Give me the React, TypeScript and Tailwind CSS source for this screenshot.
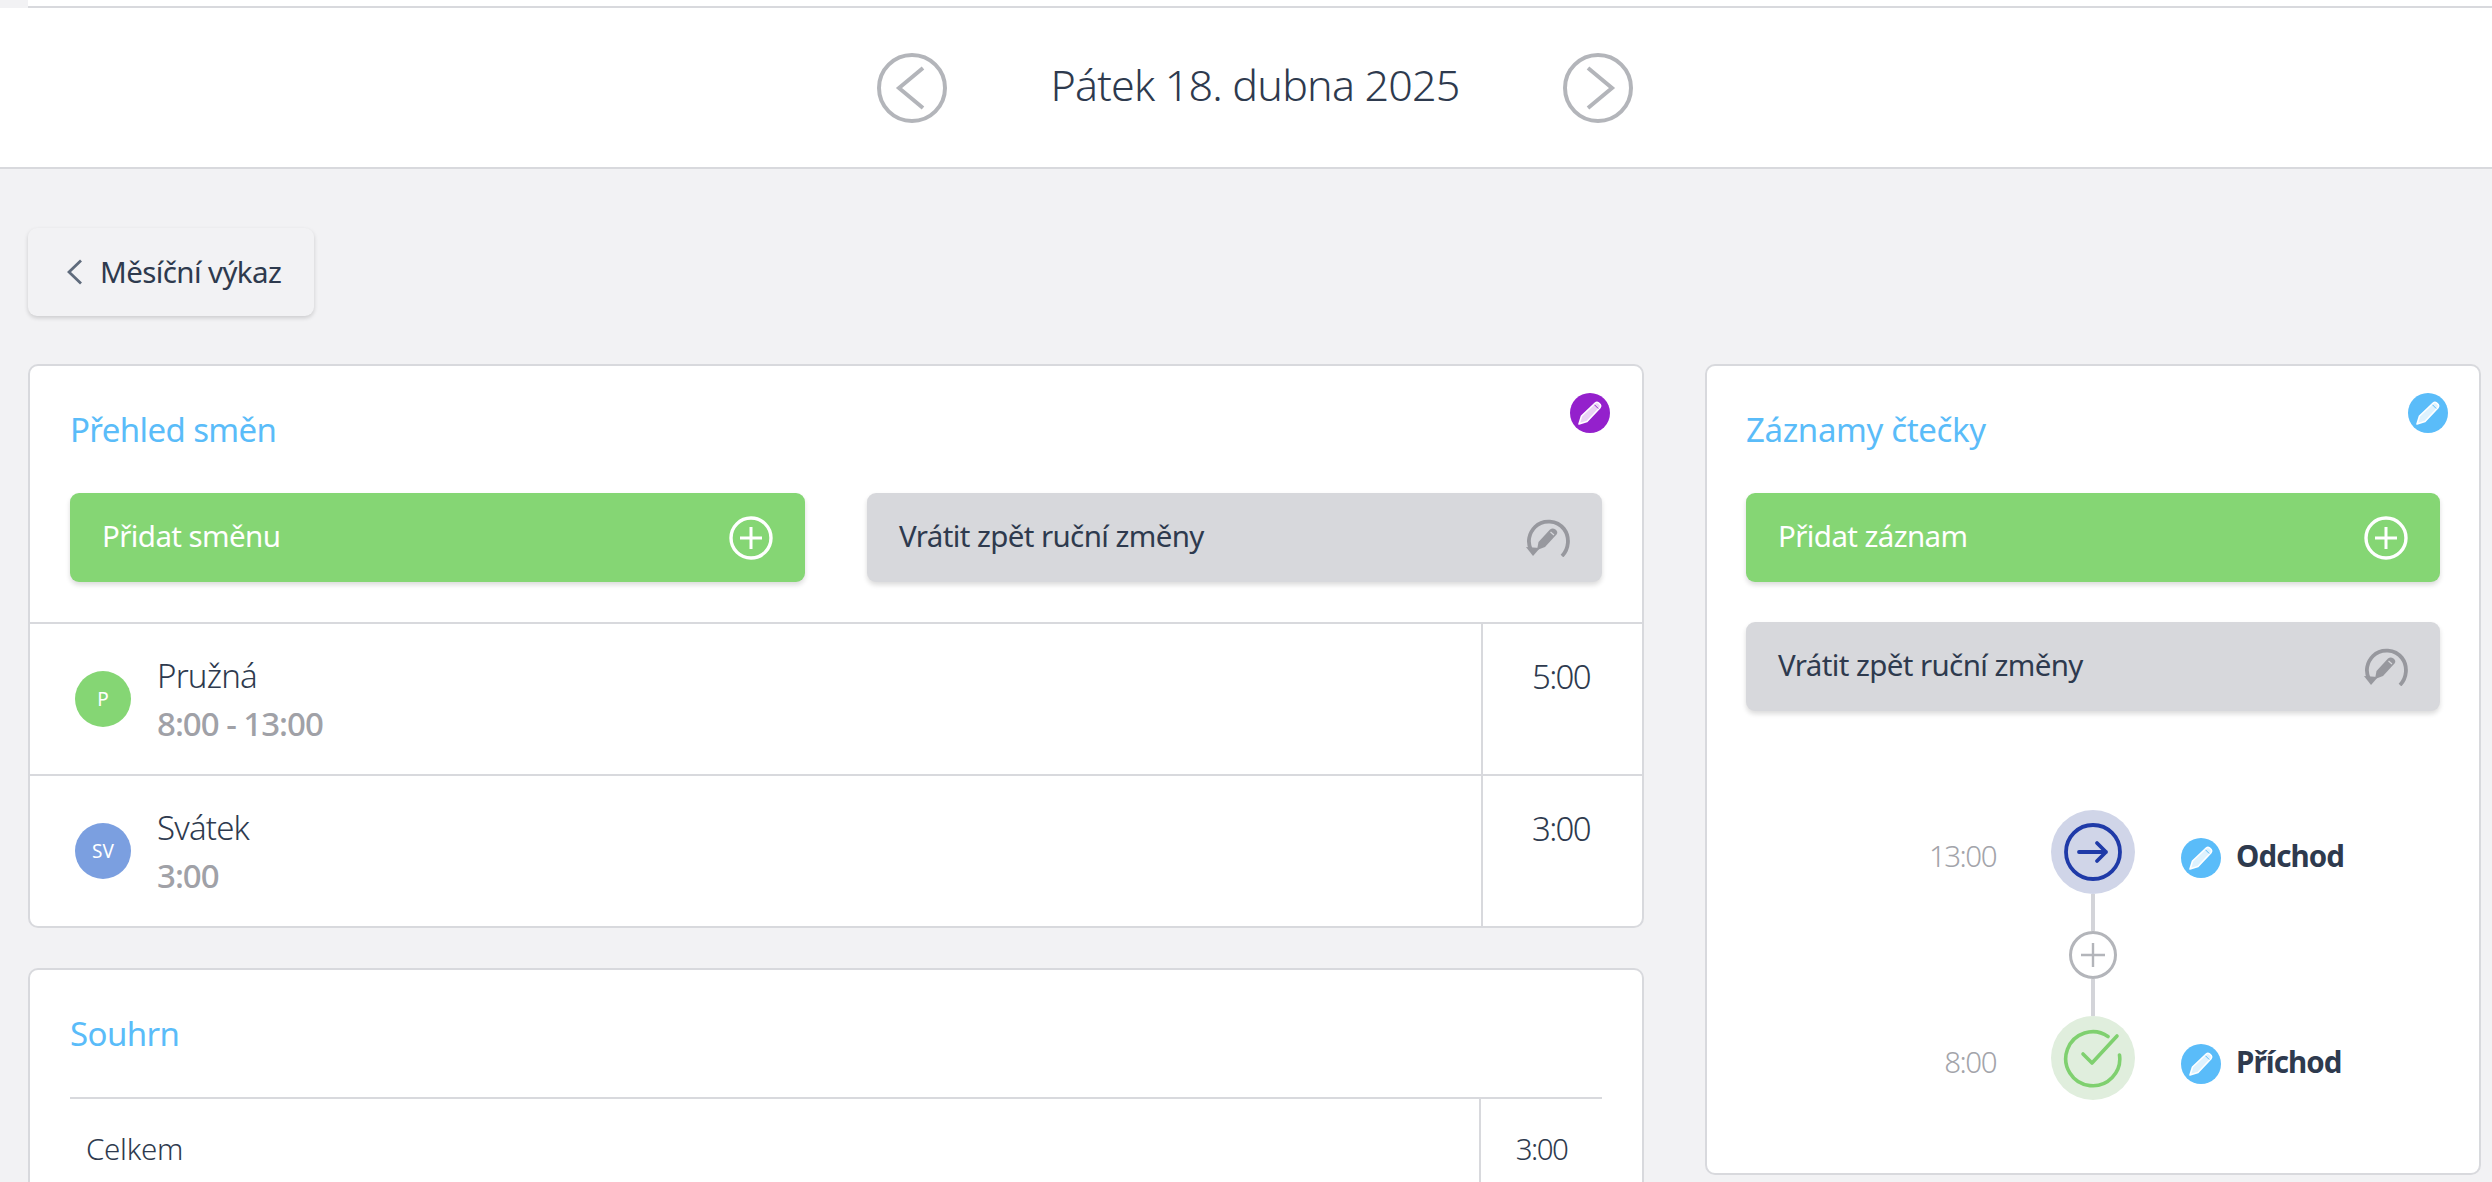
import React from "react";

function Pencil({ bg, className }: { bg: string; className?: string }) {
  return (
    <svg viewBox="0 0 40 40" className={className} width="40" height="40">
      <circle cx="20" cy="20" r="20" fill={bg} />
      <path d="M9 31 L11.5 23 L25.2 10 Q26.8 8.6 28.4 9.8 L30.2 11.6 Q31.4 13.2 30 14.8 L17 28.5 Z" fill="#fff" fillOpacity="0.8" stroke="#fff" strokeWidth="1.6" strokeLinejoin="round" />
      <path d="M24.5 11.8 L28.2 15.5" stroke={bg} strokeWidth="1" />
    </svg>
  );
}

function PlusCircle() {
  return (
    <svg viewBox="0 0 44 44" width="44" height="44" fill="none" stroke="#fff" strokeWidth="3.4">
      <circle cx="22" cy="22" r="20" />
      <path d="M22 11V33M11 22H33" strokeWidth="3" />
    </svg>
  );
}

function UndoPencil() {
  return (
    <svg viewBox="0 0 44 38" width="44" height="38" fill="none">
      <path d="M36 37 C43 30 44 18 38 10 C31 1 17 0 9 8 C3 14 1 23 5 31" stroke="#97989e" strokeWidth="3.8" />
      <path d="M0 28 L7 37 L14 29 Z" fill="#97989e" />
      <path d="M11 31 L12.5 23 L24 10.5 Q26.5 8.5 29.5 10.5 Q32.5 13 30.5 15.5 L19 28 Z" fill="#97989e" />
      <path d="M24.5 13 L28 16" stroke="#d7d8dc" strokeWidth="1.2" />
    </svg>
  );
}

function NavButton({ dir }: { dir: "prev" | "next" }) {
  return (
    <svg viewBox="0 0 70 70" width="70" height="70" fill="none" stroke="#b3b5ba" strokeWidth="4">
      <circle cx="35" cy="35" r="33" />
      {dir === "prev" ? <path d="M46 15 L22 35 L46 55" /> : <path d="M25 15 L49 35 L25 55" />}
    </svg>
  );
}

function ActionButton({ label, kind }: { label: string; kind: "add" | "undo" }) {
  const add = kind === "add";
  return (
    <div className={`flex h-[89px] items-center justify-between rounded-[9px] pl-[32px] pr-[32px] shadow-[0_3px_5px_rgba(0,0,0,0.14)] text-[29.5px] tracking-[-0.6px] ${add ? "bg-[#85d674] text-white" : "bg-[#d7d8dc] text-[#2e3a4e]"}`}>
      <span className="-mt-[2px]">{label}</span>
      {add ? <PlusCircle /> : <UndoPencil />}
    </div>
  );
}

function CardTitle({ children, className }: { children: React.ReactNode; className: string }) {
  return <h2 className={`h-[44px] text-[33px] leading-[44px] text-[#5abcf9] ${className}`}>{children}</h2>;
}

function ShiftRow({ initials, color, name, sub, total, last }: { initials: string; color: string; name: string; sub: string; total: string; last?: boolean }) {
  return (
    <div className={`flex ${last ? "h-[150px]" : "h-[152px] border-b-2 border-[#d8d9dd]"}`}>
      <div className="flex flex-1 items-center gap-[26px] pl-[45px]">
        <div className={`flex h-[56px] w-[56px] items-center justify-center rounded-full text-[19px] text-white ${color}`}>{initials}</div>
        <div className="mt-[2px] text-[33px] leading-[48px]">
          <div className="font-light tracking-[-0.8px] text-[#2e3a4e]">{name}</div>
          <div className="font-medium tracking-[-1px] text-[#a0a1a7]">{sub}</div>
        </div>
      </div>
      <div className="w-[161px] border-l-2 border-[#d8d9dd] pr-[3px] pt-[29px] text-center text-[33px] font-light leading-[48px] tracking-[-1.7px] text-[#2e3a4e]">{total}</div>
    </div>
  );
}

function TimelineRow({ time, label, circle, icon }: { time: string; label: string; circle: string; icon: React.ReactNode }) {
  return (
    <div className="flex items-center">
      <div className="mt-[9px] w-[250px] text-right text-[29.5px] font-light tracking-[-1.5px] text-[#a3a4aa]">{time}</div>
      <div className={`ml-[55px] flex h-[84px] w-[84px] items-center justify-center rounded-full ${circle}`}>{icon}</div>
      <Pencil bg="#5abcf9" className="ml-[46px] mt-[12px]" />
      <div className="ml-[15px] mt-[9px] text-[29.5px] font-bold tracking-[-0.9px] text-[#2e3a4e]">{label}</div>
    </div>
  );
}

export default function App() {
  return (
    <div className="h-[1182px] w-full overflow-hidden bg-[#f2f2f4] font-['Noto_Sans',sans-serif] text-[#2e3a4e]">
      <div className="flex h-[8px]">
        <div className="w-[28px] bg-[#f2f2f4]" />
        <div className="flex-1 border-b-2 border-[#d8d9dd] bg-white" />
      </div>
      <header className="flex h-[161px] items-center justify-center border-b-2 border-[#d8d9dd] bg-white pl-[18px]">
        <NavButton dir="prev" />
        <div className="-mt-[6px] w-[616px] text-center text-[43px] font-light leading-none tracking-[-0.8px] text-[#2e3a4e]">Pátek 18. dubna 2025</div>
        <NavButton dir="next" />
      </header>

      <main className="pl-[28px] pr-[11px] pt-[59px]">
        <button className="flex h-[88px] w-[286px] items-center gap-[18px] rounded-[9px] bg-[#f2f2f4] pl-[39px] text-[29.5px] tracking-[-0.6px] text-[#2e3a4e] shadow-[0_2px_4px_rgba(0,0,0,0.16)]">
          <svg viewBox="0 0 15 26" width="15" height="26" fill="none" stroke="#5f6b7c" strokeWidth="2.8"><path d="M14 1.5 L2 13 L14 24.5" /></svg>
          <span>Měsíční výkaz</span>
        </button>

        <div className="mt-[48px] flex gap-[61px]">
          <div className="flex w-[1616px] flex-col gap-[40px]">
            <section className="relative rounded-[10px] border-2 border-[#d8d9dd] bg-white">
              <Pencil bg="#9420cc" className="absolute right-[32px] top-[27px]" />
              <div className="border-b-2 border-[#d8d9dd] px-[40px] pb-[40px] pt-[42px]">
                <CardTitle className="tracking-[-0.6px]">Přehled směn</CardTitle>
                <div className="mt-[41px] grid grid-cols-2 gap-[62px]">
                  <ActionButton label="Přidat směnu" kind="add" />
                  <ActionButton label="Vrátit zpět ruční změny" kind="undo" />
                </div>
              </div>
              <ShiftRow initials="P" color="bg-[#85d674]" name="Pružná" sub="8:00 - 13:00" total="5:00" />
              <ShiftRow initials="SV" color="bg-[#7b9fe0]" name="Svátek" sub="3:00" total="3:00" last />
            </section>

            <section className="rounded-[10px] border-2 border-[#d8d9dd] bg-white px-[40px] pt-[42px]">
              <CardTitle className="tracking-[-0.6px]">Souhrn</CardTitle>
              <div className="mt-[41px] flex h-[120px] border-t-2 border-[#d8d9dd] text-[29.5px] font-light text-[#2e3a4e]">
                <div className="flex-1 pl-[16px] pt-[28px] tracking-[-0.3px]">Celkem</div>
                <div className="w-[123px] border-l-2 border-[#d8d9dd] pt-[28px] text-center tracking-[-1.6px]">3:00</div>
              </div>
            </section>
          </div>

          <section className="relative h-[811px] w-[776px] rounded-[10px] border-2 border-[#d8d9dd] bg-white px-[39px] pt-[42px]">
            <Pencil bg="#5abcf9" className="absolute right-[31px] top-[27px]" />
            <CardTitle className="tracking-[-0.35px]">Záznamy čtečky</CardTitle>
            <div className="mt-[41px] flex flex-col gap-[40px]">
              <ActionButton label="Přidat záznam" kind="add" />
              <ActionButton label="Vrátit zpět ruční změny" kind="undo" />
            </div>
            <div className="mt-[99px]">
              <TimelineRow
                time="13:00"
                label="Odchod"
                circle="bg-[#d0d5e8]"
                icon={
                  <svg viewBox="0 0 58 58" width="58" height="58" fill="none" stroke="#1f3aa8" strokeWidth="3.8" strokeLinecap="round" strokeLinejoin="round">
                    <circle cx="29" cy="29" r="27" />
                    <path d="M15 29H42M33 20L42 29L33 38" />
                  </svg>
                }
              />
              <div className="ml-[305px] flex w-[84px] flex-col items-center">
                <div className="h-[37px] w-[4px] bg-[#d3d4d9]" />
                <div className="flex h-[48px] w-[48px] items-center justify-center rounded-full border-[3px] border-[#b3b5ba] bg-white">
                  <svg viewBox="0 0 26 26" width="26" height="26" fill="none" stroke="#b3b5ba" strokeWidth="2.4"><path d="M13 1V25M1 13H25" /></svg>
                </div>
                <div className="h-[37px] w-[4px] bg-[#d3d4d9]" />
              </div>
              <TimelineRow
                time="8:00"
                label="Příchod"
                circle="bg-[#e0eedd]"
                icon={
                  <svg viewBox="0 0 60 60" width="60" height="60" fill="none" stroke="#7fd06f" strokeWidth="3.6" strokeLinecap="round" strokeLinejoin="round">
                    <path d="M45 8.5 A27 27 0 1 0 56.5 27" />
                    <path d="M20 26L29 35L54 8" />
                  </svg>
                }
              />
            </div>
          </section>
        </div>
      </main>
    </div>
  );
}
